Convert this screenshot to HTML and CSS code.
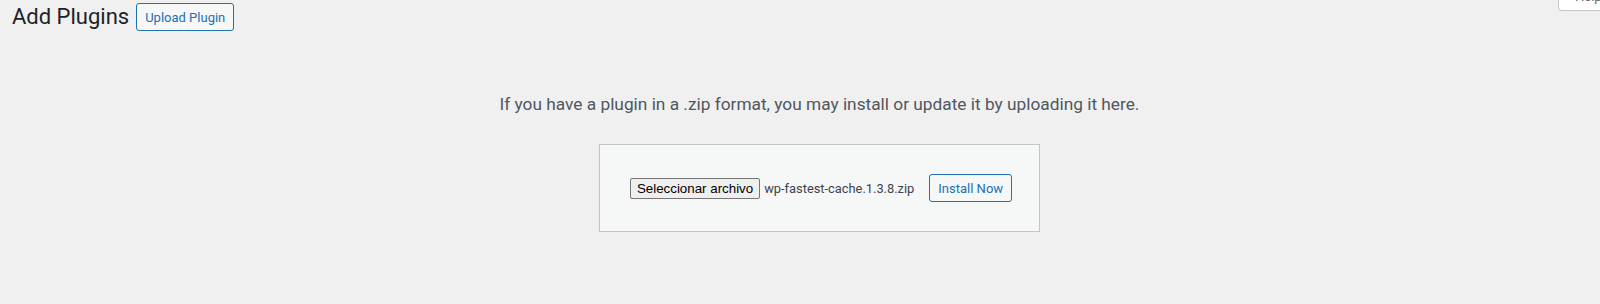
FILE: index.html
```html
<!DOCTYPE html>
<html lang="en">
<head>
    <meta charset="UTF-8">
    <meta name="viewport" content="width=device-width, initial-scale=1.0">
    <title>Add Plugins</title>
    <link rel="stylesheet" href="styles.css">
</head>
<body>
    <div id="screen-meta-links">
        <button type="button" class="screen-meta-toggle">Help</button>
    </div>

    <div class="wrap">
        <div class="page-header">
            <h1>Add Plugins</h1>
            <a href="#" class="page-title-action">Upload Plugin</a>
        </div>

        <div class="upload-plugin">
            <p class="install-help">If you have a plugin in a .zip format, you may install or update it by uploading it here.</p>
            <form class="wp-upload-form" action="#">
                <label class="file-input">
                    <span class="file-btn">Seleccionar archivo</span>
                    <span class="file-name">wp-fastest-cache.1.3.8.zip</span>
                </label>
                <button type="submit" class="button">Install Now</button>
            </form>
        </div>
    </div>
</body>
</html>
```

FILE: styles.css
```css
html, body {
    margin: 0;
    padding: 0;
    height: 100%;
    overflow: hidden;
}

body {
    background-color: #f0f0f1;
    color: #3c434a;
    font-family: -apple-system, BlinkMacSystemFont, "Segoe UI", Roboto, "Noto Sans", sans-serif;
    font-size: 13px;
    position: relative;
}

#screen-meta-links {
    position: absolute;
    top: -12px;
    left: 1558px;
}

.screen-meta-toggle {
    display: block;
    width: 64px;
    padding: 0 16px 4px;
    text-align: left;
    background: #fff;
    border: 1px solid #c3c4c7;
    border-top: none;
    border-radius: 0 0 4px 4px;
    color: #646970;
    font-family: inherit;
    font-size: 13px;
    line-height: 18px;
}

.page-header {
    display: flex;
    align-items: center;
    padding: 3px 0 0 12px;
}

.page-header h1 {
    margin: 0;
    font-size: 22px;
    font-weight: 400;
    line-height: 28px;
    color: #1d2327;
}

.page-title-action {
    display: inline-flex;
    align-items: center;
    box-sizing: border-box;
    height: 28px;
    margin-left: 7px;
    padding: 0 8px;
    border: 1px solid #2271b1;
    border-radius: 3px;
    background: #f6f7f7;
    color: #2271b1;
    font-size: 13px;
    text-decoration: none;
}

.upload-plugin {
    padding-left: 39px;
    text-align: center;
}

.install-help {
    margin: 0;
    padding-top: 61px;
    color: #50575e;
    font-size: 17.3px;
    line-height: 24px;
}

.wp-upload-form {
    display: inline-flex;
    align-items: center;
    margin-top: 28px;
    padding: 29px 27px 29px 30px;
    background: #f6f7f7;
    border: 1px solid #c3c4c7;
}

.file-input {
    display: flex;
    align-items: center;
}

.file-btn {
    box-sizing: border-box;
    height: 21px;
    padding: 0 6px;
    line-height: 19px;
    background: #efefef;
    border: 1px solid #767676;
    border-radius: 2px;
    color: #000;
    font-family: Arial, "Liberation Sans", sans-serif;
    font-size: 13.333px;
}

.file-name {
    margin-left: 4px;
    color: #3c434a;
    font-size: 12.85px;
}

.button {
    box-sizing: border-box;
    height: 28px;
    margin-left: 15px;
    padding: 0 8px;
    border: 1px solid #2271b1;
    border-radius: 3px;
    background: #f6f7f7;
    color: #2271b1;
    font-family: inherit;
    font-size: 13px;
    cursor: pointer;
}
```
